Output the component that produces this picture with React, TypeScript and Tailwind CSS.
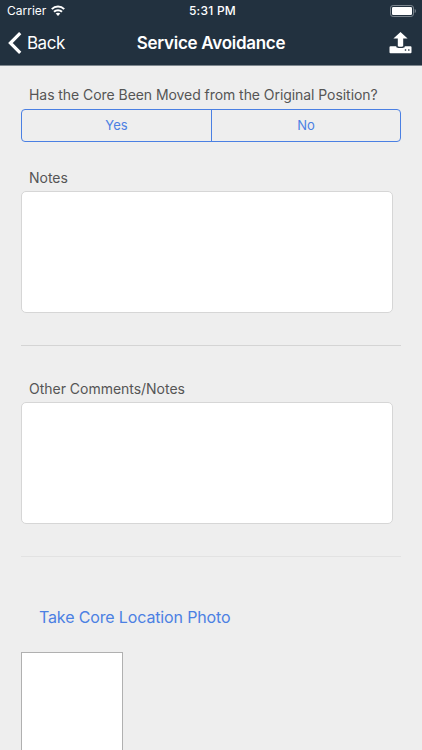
import { useState } from "react";

const answers = ["Yes", "No"];

function StatusBar() {
  return (
    <div className="grid h-[22px] grid-cols-[1fr_auto_1fr] items-center pl-[7px] pr-[6px] text-[12px] leading-[22px]">
      <div className="flex items-center gap-[5px]">
        <span>Carrier</span>
        <svg className="-mt-[2px] h-[11px] w-[14px]" viewBox="0 0 14 11" fill="none" stroke="currentColor" strokeWidth={2}>
          <path d="M0.8 4.1C4.2 0.7 9.8 0.7 13.2 4.1" />
          <path d="M3 6.7C5.2 4.6 8.8 4.6 11 6.7" />
          <path d="M7 10.9L4.7 8.6C6 7.4 8 7.4 9.3 8.6Z" fill="currentColor" stroke="none" />
        </svg>
      </div>
      <span className="pl-[2px] text-center font-medium tracking-[0.25px]">5:31 PM</span>
      <div className="flex justify-end">
        <svg className="h-[12px] w-[26px]" viewBox="0 0 26 12" fill="none">
          <rect x="0.5" y="0.5" width="23" height="11" rx="2.6" stroke="#7c868f" />
          <rect x="2" y="2" width="20" height="8" rx="1.2" fill="#fff" />
          <path d="M24.7 4v4c0.8-0.3 1.2-1 1.2-2s-0.4-1.7-1.2-2z" fill="#7c868f" />
        </svg>
      </div>
    </div>
  );
}

function NavBar() {
  return (
    <div className="grid h-[43px] grid-cols-[1fr_auto_1fr] items-center pl-[8px] pr-[10px]">
      <button className="flex items-center gap-[5px] text-[17px] tracking-[-0.5px]">
        <svg className="-mt-[2px] h-[22px] w-[14px]" viewBox="0 0 14 22" fill="none" stroke="currentColor" strokeWidth={3.2}>
          <path d="M12.2 1.2L2.4 11L12.2 20.8" />
        </svg>
        <span>Back</span>
      </button>
      <h1 className="pl-[2px] text-[17px] font-semibold tracking-[-0.28px]">Service Avoidance</h1>
      <button className="-mt-[2px] justify-self-end" aria-label="Upload">
        <svg className="h-[22px] w-[23px]" viewBox="0 0 23 22" fill="currentColor">
          <path d="M11.5 0L18.6 6.6H14.2V14.2Q11.5 15.2 8.8 14.2V6.6H4.4Z" />
          <path d="M1.5 14.3H7.3V15.2Q11.5 17 15.7 15.2V14.3H21.5Q22.5 14.3 22.5 15.3V20.2Q22.5 21.2 21.5 21.2H1.5Q0.5 21.2 0.5 20.2V15.3Q0.5 14.3 1.5 14.3Z" />
          <rect x="15.8" y="17.3" width="1.4" height="1.4" fill="#22313f" />
          <rect x="19.1" y="17.3" width="1.4" height="1.4" fill="#22313f" />
        </svg>
      </button>
    </div>
  );
}

function NotesField({ label }: { label: string }) {
  return (
    <label className="block">
      <span className="block pl-[8px] text-[14px] leading-[20px] tracking-[-0.02px]">{label}</span>
      <textarea className="mt-[3px] block h-[122px] w-[372px] resize-none rounded-[5px] border border-[#d6d6d6] bg-white p-2 text-[14px] outline-none" />
    </label>
  );
}

export default function App() {
  const [answer, setAnswer] = useState<string | null>(null);

  return (
    <main className="h-[750px] w-[422px] overflow-hidden bg-[#eeeeee] font-['Inter',sans-serif] text-[#555555]">
      {/* Header */}
      <header className="h-[66px] border-b border-[#7e878e] bg-[#22313f] text-white">
        <StatusBar />
        <NavBar />
      </header>

      <div className="pl-[21px] pr-[21px] pt-[19px]">
        <p className="whitespace-nowrap pl-[8px] text-[14px] leading-[20px] tracking-[-0.06px]">
          Has the Core Been Moved from the Original Position?
        </p>
        <div className="mt-[4px] grid h-[33px] w-[380px] grid-cols-[190px_188px] divide-x divide-[#4b80e3] overflow-hidden rounded-[4px] border border-[#4b80e3]">
          {answers.map((item) => (
            <button
              key={item}
              onClick={() => setAnswer(item)}
              className={`text-[13px] ${answer === item ? "bg-[#4b80e3] text-white" : "text-[#4b80e3]"}`}
            >
              {item}
            </button>
          ))}
        </div>

        <div className="mt-[26px]">
          <NotesField label="Notes" />
        </div>
        <hr className="mt-[32px] border-[#d4d4d4]" />

        <div className="mt-[33px]">
          <NotesField label="Other Comments/Notes" />
        </div>
        <hr className="mt-[32px] border-[#e2e2e2]" />

        {/* Photo */}
        <button className="mt-[48px] block pl-[18px] text-[16px] leading-[24px] tracking-[-0.14px] text-[#4b80e3]">
          Take Core Location Photo
        </button>
        <div className="mt-[23px] h-[120px] w-[102px] border border-[#b0b0b0] bg-white" />
      </div>
    </main>
  );
}
